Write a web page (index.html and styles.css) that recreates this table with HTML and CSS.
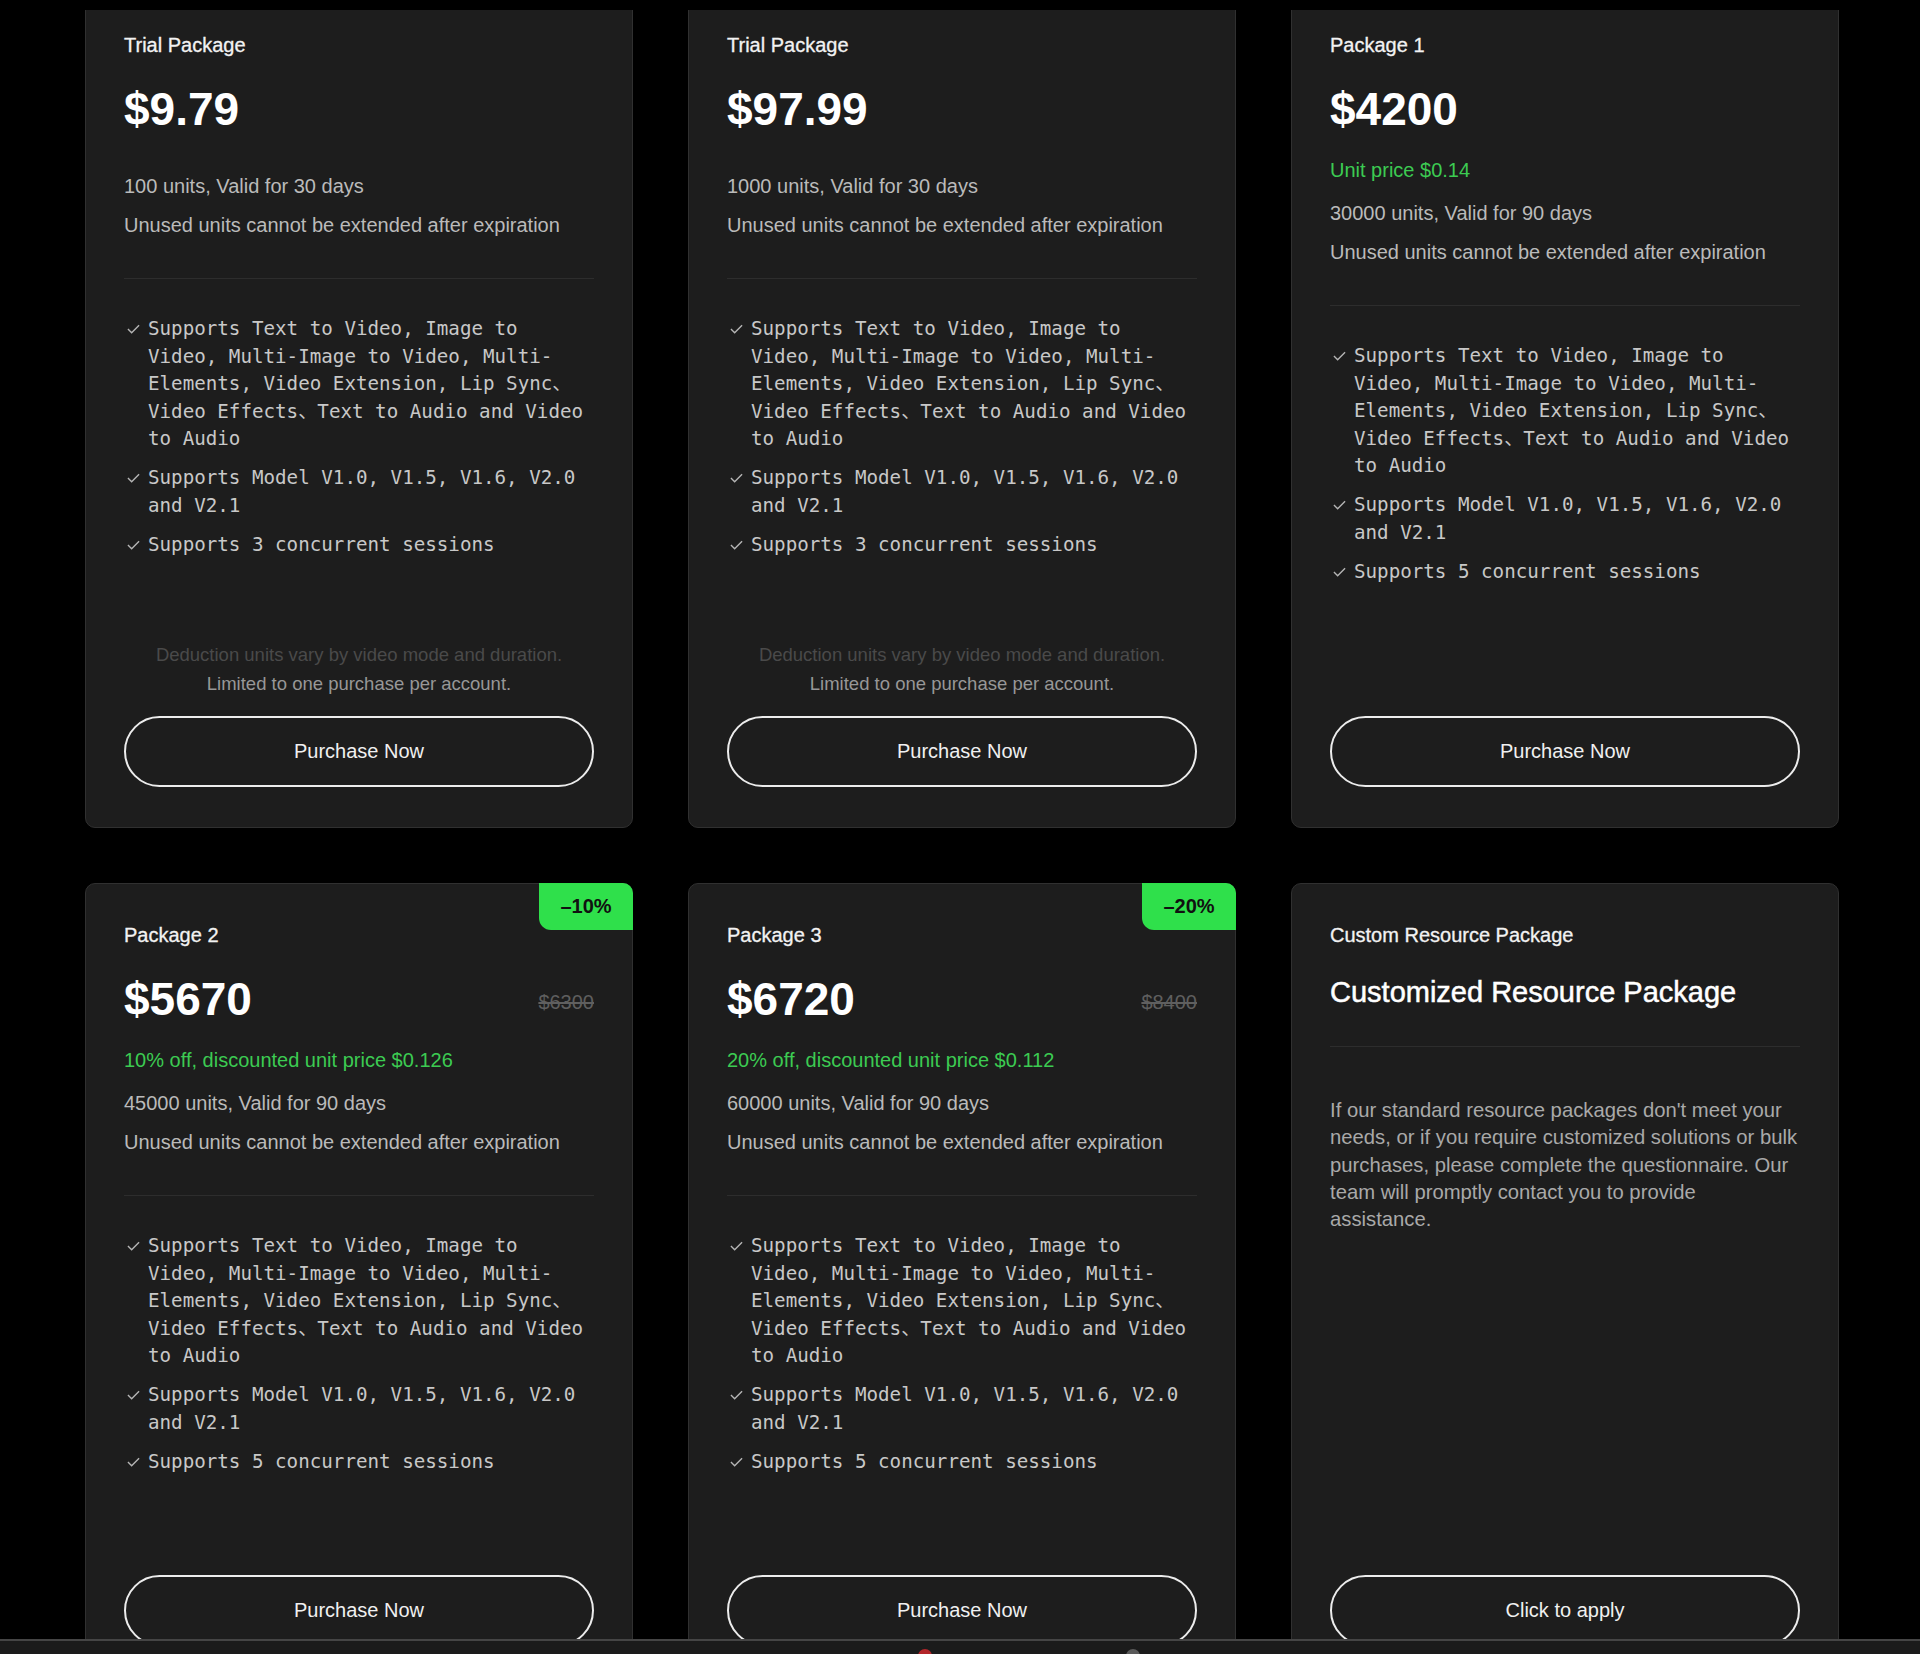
FILE: index.html
```html
<!DOCTYPE html>
<html lang="en">
<head>
    <meta charset="UTF-8">
    <meta name="viewport" content="width=device-width, initial-scale=1.0">
    <title>Resource Packages</title>
    <link rel="stylesheet" href="styles.css">
</head>
<body>
    <div class="viewport">
        <div class="grid">

            <!-- Row 1 -->
            <div class="card">
                <div class="card-title">Trial Package</div>
                <div class="price-row"><span class="price">$9.79</span></div>
                <div class="info">
                    <p>100 units, Valid for 30 days</p>
                    <p>Unused units cannot be extended after expiration</p>
                </div>
                <hr class="divider">
                <ul class="features">
                    <li><svg class="check" viewBox="0 0 14 10"><polyline points="1,5 5,9 13,1"/></svg><span>Supports Text to Video, Image to Video, Multi-Image to Video, Multi-Elements, Video Extension, Lip Sync、Video Effects、Text to Audio and Video to Audio</span></li>
                    <li><svg class="check" viewBox="0 0 14 10"><polyline points="1,5 5,9 13,1"/></svg><span>Supports Model V1.0, V1.5, V1.6, V2.0 and V2.1</span></li>
                    <li><svg class="check" viewBox="0 0 14 10"><polyline points="1,5 5,9 13,1"/></svg><span>Supports 3 concurrent sessions</span></li>
                </ul>
                <div class="card-foot">
                    <div class="notes">
                        <p class="note-dim">Deduction units vary by video mode and duration.</p>
                        <p>Limited to one purchase per account.</p>
                    </div>
                    <button class="btn">Purchase Now</button>
                </div>
            </div>

            <div class="card">
                <div class="card-title">Trial Package</div>
                <div class="price-row"><span class="price">$97.99</span></div>
                <div class="info">
                    <p>1000 units, Valid for 30 days</p>
                    <p>Unused units cannot be extended after expiration</p>
                </div>
                <hr class="divider">
                <ul class="features">
                    <li><svg class="check" viewBox="0 0 14 10"><polyline points="1,5 5,9 13,1"/></svg><span>Supports Text to Video, Image to Video, Multi-Image to Video, Multi-Elements, Video Extension, Lip Sync、Video Effects、Text to Audio and Video to Audio</span></li>
                    <li><svg class="check" viewBox="0 0 14 10"><polyline points="1,5 5,9 13,1"/></svg><span>Supports Model V1.0, V1.5, V1.6, V2.0 and V2.1</span></li>
                    <li><svg class="check" viewBox="0 0 14 10"><polyline points="1,5 5,9 13,1"/></svg><span>Supports 3 concurrent sessions</span></li>
                </ul>
                <div class="card-foot">
                    <div class="notes">
                        <p class="note-dim">Deduction units vary by video mode and duration.</p>
                        <p>Limited to one purchase per account.</p>
                    </div>
                    <button class="btn">Purchase Now</button>
                </div>
            </div>

            <div class="card">
                <div class="card-title">Package 1</div>
                <div class="price-row"><span class="price">$4200</span></div>
                <p class="unit-price">Unit price $0.14</p>
                <div class="info">
                    <p>30000 units, Valid for 90 days</p>
                    <p>Unused units cannot be extended after expiration</p>
                </div>
                <hr class="divider">
                <ul class="features">
                    <li><svg class="check" viewBox="0 0 14 10"><polyline points="1,5 5,9 13,1"/></svg><span>Supports Text to Video, Image to Video, Multi-Image to Video, Multi-Elements, Video Extension, Lip Sync、Video Effects、Text to Audio and Video to Audio</span></li>
                    <li><svg class="check" viewBox="0 0 14 10"><polyline points="1,5 5,9 13,1"/></svg><span>Supports Model V1.0, V1.5, V1.6, V2.0 and V2.1</span></li>
                    <li><svg class="check" viewBox="0 0 14 10"><polyline points="1,5 5,9 13,1"/></svg><span>Supports 5 concurrent sessions</span></li>
                </ul>
                <div class="card-foot">
                    <button class="btn">Purchase Now</button>
                </div>
            </div>

            <!-- Row 2 -->
            <div class="card">
                <span class="badge">–10%</span>
                <div class="card-title">Package 2</div>
                <div class="price-row"><span class="price">$5670</span><span class="old-price">$6300</span></div>
                <p class="unit-price">10% off, discounted unit price $0.126</p>
                <div class="info">
                    <p>45000 units, Valid for 90 days</p>
                    <p>Unused units cannot be extended after expiration</p>
                </div>
                <hr class="divider">
                <ul class="features">
                    <li><svg class="check" viewBox="0 0 14 10"><polyline points="1,5 5,9 13,1"/></svg><span>Supports Text to Video, Image to Video, Multi-Image to Video, Multi-Elements, Video Extension, Lip Sync、Video Effects、Text to Audio and Video to Audio</span></li>
                    <li><svg class="check" viewBox="0 0 14 10"><polyline points="1,5 5,9 13,1"/></svg><span>Supports Model V1.0, V1.5, V1.6, V2.0 and V2.1</span></li>
                    <li><svg class="check" viewBox="0 0 14 10"><polyline points="1,5 5,9 13,1"/></svg><span>Supports 5 concurrent sessions</span></li>
                </ul>
                <div class="card-foot">
                    <button class="btn">Purchase Now</button>
                </div>
            </div>

            <div class="card">
                <span class="badge">–20%</span>
                <div class="card-title">Package 3</div>
                <div class="price-row"><span class="price">$6720</span><span class="old-price">$8400</span></div>
                <p class="unit-price">20% off, discounted unit price $0.112</p>
                <div class="info">
                    <p>60000 units, Valid for 90 days</p>
                    <p>Unused units cannot be extended after expiration</p>
                </div>
                <hr class="divider">
                <ul class="features">
                    <li><svg class="check" viewBox="0 0 14 10"><polyline points="1,5 5,9 13,1"/></svg><span>Supports Text to Video, Image to Video, Multi-Image to Video, Multi-Elements, Video Extension, Lip Sync、Video Effects、Text to Audio and Video to Audio</span></li>
                    <li><svg class="check" viewBox="0 0 14 10"><polyline points="1,5 5,9 13,1"/></svg><span>Supports Model V1.0, V1.5, V1.6, V2.0 and V2.1</span></li>
                    <li><svg class="check" viewBox="0 0 14 10"><polyline points="1,5 5,9 13,1"/></svg><span>Supports 5 concurrent sessions</span></li>
                </ul>
                <div class="card-foot">
                    <button class="btn">Purchase Now</button>
                </div>
            </div>

            <div class="card">
                <div class="card-title">Custom Resource Package</div>
                <h2 class="custom-title">Customized Resource Package</h2>
                <hr class="divider custom-divider">
                <p class="custom-text">If our standard resource packages don't meet your needs, or if you require customized solutions or bulk purchases, please complete the questionnaire. Our team will promptly contact you to provide assistance.</p>
                <div class="card-foot">
                    <button class="btn">Click to apply</button>
                </div>
            </div>

        </div>
    </div>

    <!-- bottom bar, mostly out of view -->
    <div class="bottom-bar">
        <span class="dot dot-red"></span>
        <span class="dot dot-gray"></span>
    </div>
</body>
</html>
```
FILE: styles.css
```css
body {
    margin: 0;
    background: #000;
    font-family: "Liberation Sans", Arial, "Noto Sans CJK SC", sans-serif;
    color: #bdbdbd;
}

p {
    margin: 0;
}

/* scrolled area, top row is partly hidden */
.viewport {
    margin-top: 10px;
    height: 1629px;
    overflow: hidden;
}

.grid {
    display: grid;
    grid-template-columns: repeat(3, 548px);
    gap: 55px;
    margin: -17px 0 0 85px;
}

.card {
    position: relative;
    display: flex;
    flex-direction: column;
    background: #1d1d1d;
    border: 1px solid #303030;
    border-radius: 10px;
    padding: 37px 38px 40px;
}

.badge {
    position: absolute;
    top: -1px;
    right: -1px;
    width: 94px;
    height: 47px;
    display: flex;
    align-items: center;
    justify-content: center;
    background: #2fe04b;
    color: #111;
    font-size: 20px;
    font-weight: bold;
    border-radius: 0 10px 0 12px;
}

.card-title {
    font-size: 20px;
    line-height: 28px;
    color: #f2f2f2;
    -webkit-text-stroke: 0.3px #f2f2f2;
}

.price-row {
    display: flex;
    justify-content: space-between;
    align-items: center;
    margin-top: 22px;
    height: 56px;
}

.price {
    font-size: 46px;
    font-weight: bold;
    color: #fff;
}

.old-price {
    font-size: 20px;
    color: #5f5f5f;
    text-decoration: line-through;
    margin-top: 6px;
}

.unit-price {
    margin-top: 17px;
    font-size: 20px;
    line-height: 32px;
    color: #3ccb52;
}

.info {
    margin-top: 33px;
    display: flex;
    flex-direction: column;
    gap: 7px;
    font-size: 20px;
    line-height: 32px;
    color: #bababa;
}

.unit-price + .info {
    margin-top: 11px;
}

.divider {
    border: none;
    border-top: 1px solid #2d2d2d;
    margin: 37px 0 0;
}

.features {
    list-style: none;
    margin: 36px 0 82px;
    padding: 0;
    display: flex;
    flex-direction: column;
    gap: 11.5px;
    font-family: "DejaVu Sans Mono", "Noto Sans CJK SC", monospace;
    font-size: 19.2px;
    line-height: 27.5px;
    color: #c8c8c8;
}

.features li {
    display: grid;
    grid-template-columns: 24px 1fr;
}

.check {
    width: 13px;
    height: 10px;
    margin: 9px 0 0 3px;
    fill: none;
    stroke: #b5b5b5;
    stroke-width: 1.5;
}

.card-foot {
    margin-top: auto;
    display: flex;
    flex-direction: column;
}

.notes {
    text-align: center;
    font-size: 18.5px;
    line-height: 29px;
    color: #979797;
    margin-bottom: 18px;
}

.note-dim {
    color: #4a4a4a;
}

.btn {
    height: 71px;
    margin-top: 18px;
    background: transparent;
    border: 2px solid #ececec;
    border-radius: 36px;
    color: #f0f0f0;
    font-family: inherit;
    font-size: 20px;
    cursor: pointer;
}

.notes + .btn {
    margin-top: 0;
}

.custom-title {
    margin: 23px 0 0;
    font-size: 29px;
    line-height: 40px;
    font-weight: normal;
    color: #fff;
    -webkit-text-stroke: 0.5px #fff;
}

.custom-divider {
    margin-top: 34px;
}

.custom-text {
    margin-top: 50px;
    font-size: 20.25px;
    line-height: 27.3px;
    color: #a9a9a9;
}

.bottom-bar {
    position: relative;
    height: 13px;
    background: #1b1b1b;
    border-top: 2px solid #454545;
    overflow: hidden;
}

.dot {
    position: absolute;
    top: 8px;
    width: 14px;
    height: 14px;
    border-radius: 50%;
}

.dot-red {
    left: 918px;
    background: #b3262a;
}

.dot-gray {
    left: 1126px;
    background: #5a5a5a;
}
```
